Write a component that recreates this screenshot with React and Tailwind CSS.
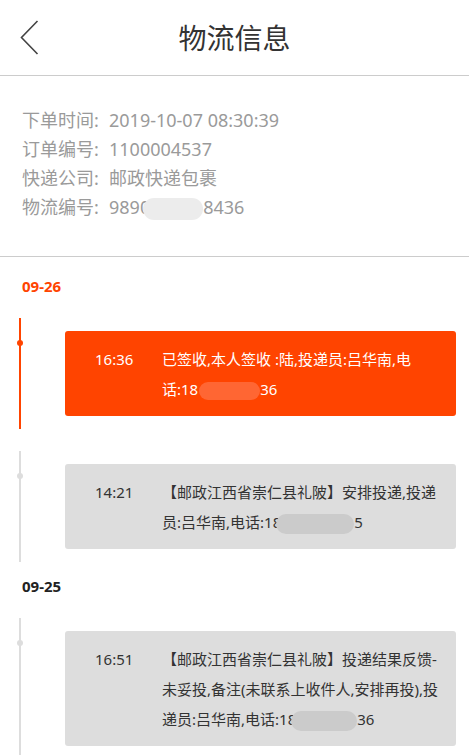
import React from "react";

const Blur = ({ className }) => (
  <span className={"relative inline-block align-middle rounded-full " + className} />
);

const Label = ({ children }) => (
  <>
    {children}
    <span className="inline-block w-[15px]">:</span>
  </>
);

function Card({ active, time, lines }) {
  return (
    <div
      className={
        "relative border-l-2 py-[13px] " +
        (active ? "border-[#ff4400]" : "border-[#dddddd]")
      }
    >
      <span
        className={
          "absolute left-[-4px] top-[22px] w-[6px] h-[6px] rounded-full " +
          (active ? "bg-[#ff4400]" : "bg-[#dddddd]")
        }
      />
      <div
        className={
          "ml-[44px] mr-[13px] rounded-[3px] flex pl-[30px] pt-[13px] pb-[12px] text-[15px] leading-[30px] " +
          (active ? "bg-[#ff4400] text-white" : "bg-[#dddddd] text-[#333333]")
        }
      >
        <div className="w-[67px] shrink-0">{time}</div>
        <div className="flex-1">
          {lines.map((l, i) => (
            <div key={i} className="whitespace-nowrap">
              {l}
            </div>
          ))}
        </div>
      </div>
    </div>
  );
}

export default function App() {
  return (
    <div className="w-[469px] h-[755px] overflow-hidden bg-white font-[family-name:'Noto_Sans','Noto_Sans_CJK_SC',sans-serif]">
      <header className="h-[76px] border-b border-[#cccccc] grid grid-cols-[1fr_auto_1fr] items-center">
        <div className="pl-[20px] flex items-center">
          <svg width="19" height="36" viewBox="0 0 19 36" fill="none">
            <path d="M17.5 1 L1.5 17.5 L17.5 34" stroke="#444444" strokeWidth="1.6" />
          </svg>
        </div>
        <h1 className="text-[28px] text-[#333333] leading-none">物流信息</h1>
        <div />
      </header>

      <section className="border-b border-[#cccccc] pt-[30px] pb-[34px] pl-[22px] text-[18px] leading-[29px] text-[#9a9a9a]">
        <div><Label>下单时间</Label>2019-10-07 08:30:39</div>
        <div><Label>订单编号</Label>1100004537</div>
        <div><Label>快递公司</Label>邮政快递包裹</div>
        <div className="whitespace-nowrap">
          <Label>物流编号</Label>9890
          <Blur className="-ml-[7px] w-[60px] h-[22px] bg-[#ececec] rounded-[9px]" />
          8436
        </div>
      </section>

      <div className="pt-[19px]">
        <div className="pl-[22px] text-[15px] leading-[21px] font-bold text-[#ff4400] mb-[21px]">
          09-26
        </div>
        <div className="ml-[19px] flex flex-col gap-[22px]">
          <Card
            active
            time="16:36"
            lines={[
              "已签收,本人签收 :陆,投递员:吕华南,电",
              <>
                话:18
                <Blur className="ml-[1px] w-[61px] h-[18px] bg-[#ff6633]" />
                36
              </>,
            ]}
          />
          <Card
            time="14:21"
            lines={[
              "【邮政江西省崇仁县礼陂】安排投递,投递",
              <>
                员:吕华南,电话:18
                <Blur className="-ml-[5px] w-[78px] h-[20px] bg-[#cbcbcb]" />
                5
              </>,
            ]}
          />
        </div>

        <div className="mt-[14px] pl-[22px] text-[15px] leading-[21px] font-bold text-[#222222] mb-[21px]">
          09-25
        </div>
        <div className="ml-[19px] flex flex-col gap-[22px]">
          <Card
            time="16:51"
            lines={[
              "【邮政江西省崇仁县礼陂】投递结果反馈-",
              "未妥投,备注(未联系上收件人,安排再投),投",
              <>
                递员:吕华南,电话:18
                <Blur className="-ml-[5px] w-[66px] h-[20px] bg-[#cbcbcb]" />
                36
              </>,
            ]}
          />
        </div>
      </div>
    </div>
  );
}
